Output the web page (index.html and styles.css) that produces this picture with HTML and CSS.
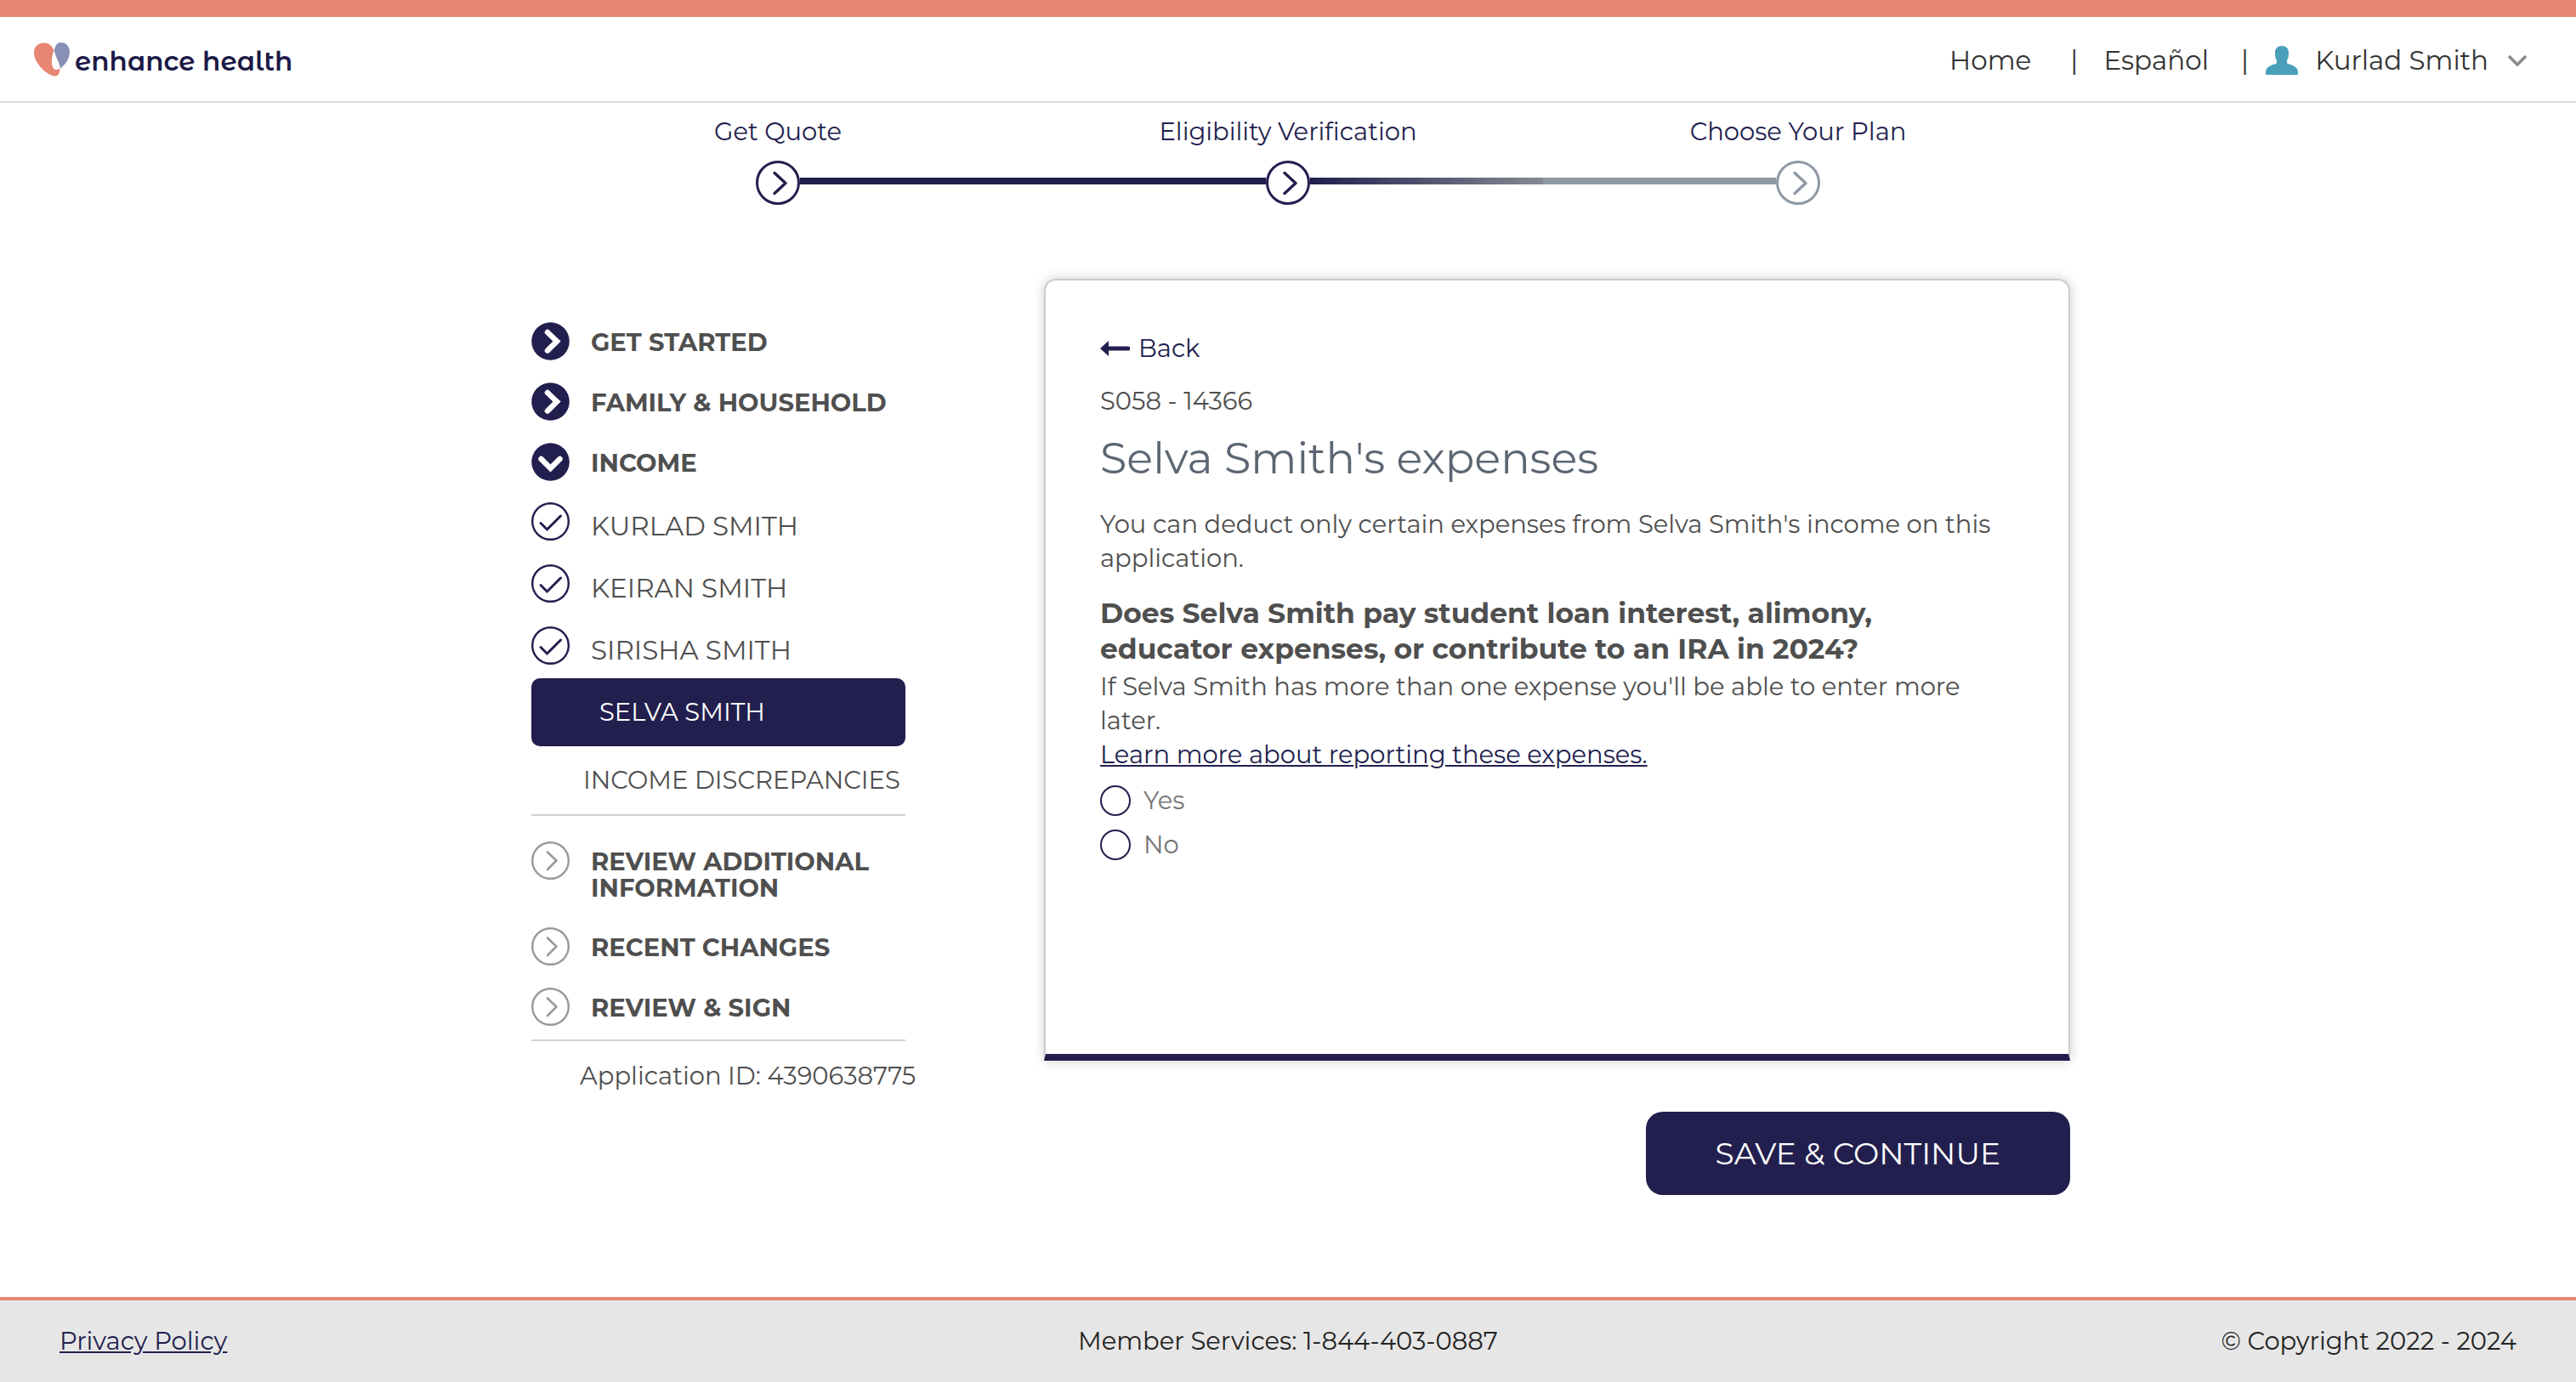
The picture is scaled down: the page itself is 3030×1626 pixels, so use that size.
FILE: index.html
```html
<!DOCTYPE html>
<html lang="en">
<head>
<meta charset="utf-8">
<title>Selva Smith's expenses - enhance health</title>
<meta name="viewport" content="width=device-width, initial-scale=1">
<link rel="stylesheet" href="styles.css">
</head>
<body>
<svg width="0" height="0" class="sprite" aria-hidden="true">
  <symbol id="solid-right" viewBox="0 0 45 45">
    <circle cx="22.500" cy="22.500" r="22.300" fill="#221f4e"/>
    <path d="M19 12l11 10.500-11 11" fill="none" stroke="#fff" stroke-width="6.500" stroke-linecap="round" stroke-linejoin="miter"/>
  </symbol>
  <symbol id="solid-down" viewBox="0 0 45 45">
    <circle cx="22.500" cy="22.500" r="22.300" fill="#221f4e"/>
    <path d="M11.500 19l11 11 11-11" fill="none" stroke="#fff" stroke-width="6.500" stroke-linecap="round"/>
  </symbol>
  <symbol id="tick" viewBox="0 0 45 45">
    <circle cx="22.500" cy="22.500" r="21.300" fill="#fff" stroke="#221f4e" stroke-width="2.400"/>
    <path d="M11 24.500l7.500 7.500L34.500 16" fill="none" stroke="#221f4e" stroke-width="3" stroke-linecap="round"/>
  </symbol>
  <symbol id="ring-right" viewBox="0 0 45 45">
    <circle cx="22.500" cy="22.500" r="21.300" fill="#fff" stroke="#999" stroke-width="2.400"/>
    <path d="M19 12.500l10.500 10-10.500 10.500" fill="none" stroke="#999" stroke-width="2.600" stroke-linecap="round" stroke-linejoin="round"/>
  </symbol>
  <symbol id="step" viewBox="0 0 52 52">
    <circle cx="26" cy="26" r="24.500" fill="#fff" stroke="currentColor" stroke-width="3"/>
    <path d="M22 14.500L35 26.500 22 38.500" fill="none" stroke="currentColor" stroke-width="3.400" stroke-linecap="round" stroke-linejoin="round"/>
  </symbol>
</svg>

<header class="header">
  <a class="logo" href="#">
    <svg class="logo-mark" viewBox="0 0 42 40" aria-hidden="true">
      <path d="M12 .5C17 .3 21 3.500 23.500 9.500 21 15 20.500 20 21 25c.5 5 3 7.500 6 7 2-.4 3-1.500 3.400-2 .2 5-1.400 9.500-5.400 9.500C15 39 0 24 0 12 0 5 4 .8 12 .5z" fill="#e68673"/>
      <path d="M23.800 9.500C25 3 27.500 0 31.500 0 38 0 42 4.500 42 11.500 42 19 36 27 31 30.500 30 23 25.500 18 23.800 9.500z" fill="#8890b6"/>
    </svg>
    <span>enhance health</span>
  </a>
  <nav class="nav">
    <a class="nav-home" href="#">Home</a>
    <span class="bar">|</span>
    <a class="nav-lang" href="#">Español</a>
    <span class="bar">|</span>
    <button class="account" type="button">
      <svg class="person" viewBox="0 0 38 34" aria-hidden="true"><path d="M19 0c5 0 8 3 8 8 0 3 0 6-1.500 8-.7 1.500-.5 3 0 5C32 22.500 38 25 38 31v3H0v-3c0-6 6-8.500 12.500-10 .5-2 .7-3.500 0-5C11 14 11 11 11 8c0-5 3-8 8-8z" fill="#4aa0ba"/></svg>
      <span>Kurlad Smith</span>
      <svg class="caret" viewBox="0 0 24 14" aria-hidden="true"><path d="M2 2l10 10L22 2" fill="none" stroke="#8a8a8a" stroke-width="3.500"/></svg>
    </button>
  </nav>
</header>

<ol class="steps">
  <li class="step first">
    <span class="step-label">Get Quote</span>
    <span class="track"><i class="line"></i><svg class="step-icon"><use href="#step"/></svg><i class="line"></i></span>
  </li>
  <li class="step current">
    <span class="step-label">Eligibility Verification</span>
    <span class="track"><i class="line"></i><svg class="step-icon"><use href="#step"/></svg><i class="line fade"></i></span>
  </li>
  <li class="step last">
    <span class="step-label">Choose Your Plan</span>
    <span class="track"><i class="line"></i><svg class="step-icon"><use href="#step"/></svg><i class="line"></i></span>
  </li>
</ol>

<main class="page">
  <aside class="side">
    <ul class="menu">
      <li><a class="row" href="#"><svg class="icon"><use href="#solid-right"/></svg><b>GET STARTED</b></a></li>
      <li><a class="row" href="#"><svg class="icon"><use href="#solid-right"/></svg><b>FAMILY &amp; HOUSEHOLD</b></a></li>
      <li><a class="row" href="#"><svg class="icon"><use href="#solid-down"/></svg><b>INCOME</b></a></li>
      <li><a class="row sub" href="#"><svg class="icon"><use href="#tick"/></svg><span>KURLAD SMITH</span></a></li>
      <li><a class="row sub" href="#"><svg class="icon"><use href="#tick"/></svg><span>KEIRAN SMITH</span></a></li>
      <li><a class="row sub" href="#"><svg class="icon"><use href="#tick"/></svg><span>SIRISHA SMITH</span></a></li>
      <li><a class="selected" href="#" aria-current="page">SELVA SMITH</a></li>
      <li><a class="plain" href="#">INCOME DISCREPANCIES</a></li>
    </ul>
    <ul class="menu later">
      <li><a class="next" href="#"><svg class="icon"><use href="#ring-right"/></svg><b>REVIEW ADDITIONAL INFORMATION</b></a></li>
      <li><a class="next" href="#"><svg class="icon"><use href="#ring-right"/></svg><b>RECENT CHANGES</b></a></li>
      <li><a class="next" href="#"><svg class="icon"><use href="#ring-right"/></svg><b>REVIEW &amp; SIGN</b></a></li>
    </ul>
    <p class="app-id">Application ID: 4390638775</p>
  </aside>

  <form class="content">
    <section class="card">
      <a class="back" href="#">
        <svg class="arrow" viewBox="0 0 35 18" aria-hidden="true"><path d="M0 9l10-9v6.500h23a2.500 2.500 0 0 1 0 5H10V18z" fill="#221f4e"/></svg>
        <span>Back</span>
      </a>
      <p class="code">S058 - 14366</p>
      <h1 class="title">Selva Smith's expenses</h1>
      <p class="text intro">You can deduct only certain expenses from Selva Smith's income on this application.</p>
      <fieldset class="question">
        <legend class="legend">Does Selva Smith pay student loan interest, alimony, educator expenses, or contribute to an IRA in 2024?</legend>
        <p class="text">If Selva Smith has more than one expense you'll be able to enter more later.</p>
        <a class="more" href="#">Learn more about reporting these expenses.</a>
        <label class="choice"><input class="radio" type="radio" name="expenses" value="yes">Yes</label>
        <label class="choice"><input class="radio" type="radio" name="expenses" value="no">No</label>
      </fieldset>
    </section>
    <button class="save" type="submit">SAVE &amp; CONTINUE</button>
  </form>
</main>

<footer class="footer">
  <a class="privacy" href="#">Privacy Policy</a>
  <span class="services">Member Services: 1-844-403-0887</span>
  <span class="copy">© Copyright 2022 - 2024</span>
</footer>
</body>
</html>
```
FILE: styles.css
```css
* {
  box-sizing: border-box;
}

body {
  margin: 0;
  min-height: 100vh;
  display: flex;
  flex-direction: column;
  background: #fff;
  color: #4f4f4f;
  font-family: Montserrat, Inter, sans-serif;
  font-size: 29px;
  font-weight: 400;
  line-height: 40px;
}

a {
  color: inherit;
  text-decoration: none;
}

p,
h1,
ul,
ol {
  margin: 0;
  padding: 0;
}

ul,
ol {
  list-style: none;
}

button {
  font: inherit;
  color: inherit;
  border: 0;
  padding: 0;
  background: none;
  cursor: pointer;
}

.sprite {
  position: absolute;
}

/* Header */
.header {
  display: flex;
  justify-content: space-between;
  align-items: center;
  border-top: 20px solid #e68673;
  border-bottom: 2px solid #d9d9d9;
  height: 121px;
  padding: 0 57px 0 40px;
}

.logo {
  display: flex;
  align-items: center;
  gap: 6px;
  color: #1b1946;
  font-family: "Montserrat Alternates", Montserrat, Inter, sans-serif;
  font-size: 31px;
  font-weight: 600;
}

.logo span {
  padding-top: 4px;
}

.logo-mark {
  width: 42px;
  height: 40px;
}

.nav {
  display: flex;
  align-items: center;
  padding-top: 2px;
  color: #333;
  font-size: 31px;
}

.nav-home {
  margin-right: 46px;
}

.nav-lang {
  margin-right: 38px;
}

.bar {
  margin-right: 30px;
}

.bar + .account {
  margin-left: -10px;
}

.account {
  display: flex;
  align-items: center;
}

.person {
  width: 38px;
  height: 34px;
  margin-right: 20px;
}

.caret {
  width: 24px;
  height: 14px;
  margin-left: 22px;
}

/* Progress */
.steps {
  display: grid;
  grid-template-columns: repeat(3, 1fr);
  width: 100%;
  max-width: 1800px;
  margin: 0 auto;
  padding-top: 14px;
  color: #221f4e;
}

.step {
  display: flex;
  flex-direction: column;
  gap: 14px;
  text-align: center;
}

.track {
  display: flex;
  align-items: center;
}

.step-icon {
  width: 52px;
  height: 52px;
}

.line {
  flex: 1;
  height: 8px;
  margin-bottom: 4px;
  background: #221f4e;
}

.line.fade {
  background: linear-gradient(90deg, #221f4e, #848a92);
}

.last .step-icon {
  color: #8f99a6;
}

.last .line {
  background: #8f99a6;
}

.first .line:first-child,
.last .line:last-child {
  background: none;
}

/* Main columns */
.page {
  display: grid;
  grid-template-columns: 440px 1fr;
  column-gap: 163px;
  width: 100%;
  max-width: 1840px;
  margin: 0 auto;
  padding: 87px 0 119px 30px;
}

.side {
  padding-top: 38px;
}

.icon {
  flex: none;
  width: 45px;
  height: 45px;
}

.menu b {
  font-weight: 700;
  line-height: 31px;
}

.row {
  display: flex;
  align-items: center;
  gap: 25px;
  height: 71px;
}

.row b {
  padding-top: 2px;
}

.row.sub {
  height: 73px;
  padding-bottom: 4px;
  font-size: 31px;
}

.sub span {
  padding-top: 10px;
}

.selected {
  display: block;
  padding: 20px 80px;
  border-radius: 10px;
  background: #221f4e;
  color: #fff;
}

.plain {
  display: block;
  padding: 20px 0 20px 61px;
  white-space: nowrap;
}

.later {
  display: flex;
  flex-direction: column;
  gap: 26px;
  padding: 30px 0 16px;
  border-top: 2px solid #d2d2d2;
  border-bottom: 2px solid #d2d2d2;
}

.next {
  display: flex;
  align-items: flex-start;
  gap: 25px;
}

.next b {
  padding: 8px 0 5px;
}

.app-id {
  padding: 21px 0 0 57px;
  white-space: nowrap;
}

/* Question card */
.content {
  display: flex;
  flex-direction: column;
  align-items: flex-end;
  gap: 60px;
}

.card {
  width: 100%;
  min-height: 920px;
  padding: 60px 76px 60px 64px;
  border: 2px solid #ccc;
  border-bottom: 8px solid #221f4e;
  border-radius: 14px 14px 0 0;
  box-shadow: 0 0 14px rgba(0, 0, 0, .2);
}

.back {
  display: flex;
  align-items: center;
  gap: 10px;
  color: #221f4e;
}

.arrow {
  width: 35px;
  height: 18px;
}

.code {
  padding-top: 22px;
}

.title {
  padding: 15px 0 16px;
  color: #5c6673;
  font-size: 51px;
  font-weight: 400;
  line-height: 64px;
}

.intro {
  padding-top: 10px;
}

.question {
  margin: 0;
  padding: 0;
  border: 0;
}

.legend {
  padding: 23px 0 4px;
  font-size: 33px;
  font-weight: 700;
  line-height: 42px;
}

.more {
  color: #221f4e;
  text-decoration: underline;
}

.choice {
  display: flex;
  align-items: center;
  gap: 15px;
  margin-top: 12px;
  color: #757575;
}

.more + .choice {
  margin-top: 14px;
}

.radio {
  appearance: none;
  width: 36px;
  height: 36px;
  margin: 0;
  border: 2px solid #221f4e;
  border-radius: 50%;
}

.save {
  padding: 29px 82px;
  border-radius: 20px;
  background: #221f4e;
  color: #fff;
  font-size: 36px;
}

/* Footer */
.footer {
  display: grid;
  grid-template-columns: 1fr auto 1fr;
  margin-top: auto;
  padding: 28px 70px;
  border-top: 4px solid #e68673;
  background: #e6e6e6;
  color: #222;
}

.privacy {
  color: #221f4e;
  text-decoration: underline;
}

.copy {
  text-align: right;
}
```
